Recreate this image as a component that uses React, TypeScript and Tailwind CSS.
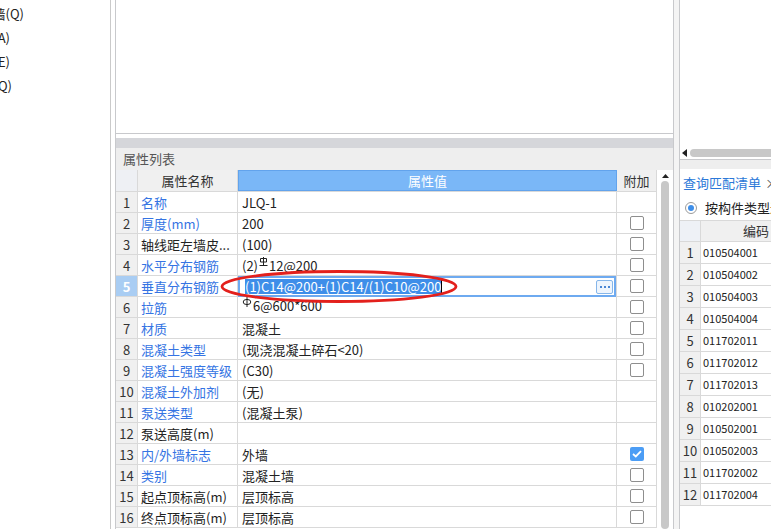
import React from "react";

type Check = "none" | "off" | "on";
type Prop = { name: string; value: React.ReactNode; link: boolean; check: Check };

function SteelIII() {
  return (
    <svg width="9" height="9" viewBox="0 0 9 9" fill="none" stroke="#222" strokeWidth="1" className="mx-[1px] -translate-y-[4px]">
      <path d="M4.5 0V8.5" />
      <path d="M1.5 1.5H7.5V5H1.5Z" />
      <path d="M0.5 8.5H8.5" />
    </svg>
  );
}

function Phi() {
  return (
    <svg width="10" height="10" viewBox="0 0 10 10" fill="none" stroke="#222" strokeWidth="1" className="mr-[1px] -translate-y-[3px]">
      <path d="M5 0V10" />
      <ellipse cx="5" cy="5" rx="3.8" ry="2.6" />
    </svg>
  );
}

function EditValue() {
  return (
    <div className="flex h-full w-full items-center border-2 border-[#6eaaf0] bg-white pl-[5px] pr-[1px]">
      <span className="bg-[#3e8ee9] leading-[15px] text-white">(1)C14@200+(1)C14/(1)C10@200</span>
      <span className="h-[15px] w-px bg-black" />
      <span className="flex-1" />
      <span className="flex h-[14px] w-[17px] items-center justify-center gap-[2px] rounded-[2px] border border-[#86b6ea] bg-[#eef5fd]">
        <span className="h-[2px] w-[2px] bg-[#4a86d4]" />
        <span className="h-[2px] w-[2px] bg-[#4a86d4]" />
        <span className="h-[2px] w-[2px] bg-[#4a86d4]" />
      </span>
    </div>
  );
}

const props: Prop[] = [
  { name: "名称", value: "JLQ-1", link: true, check: "none" },
  { name: "厚度(mm)", value: "200", link: true, check: "off" },
  { name: "轴线距左墙皮...", value: "(100)", link: false, check: "off" },
  { name: "水平分布钢筋", value: <>(2)<SteelIII />12@200</>, link: true, check: "off" },
  { name: "垂直分布钢筋", value: null, link: true, check: "off" },
  { name: "拉筋", value: <span className="flex -translate-y-[2px] items-center"><Phi />6@600*600</span>, link: true, check: "off" },
  { name: "材质", value: "混凝土", link: true, check: "off" },
  { name: "混凝土类型", value: "(现浇混凝土碎石<20)", link: true, check: "off" },
  { name: "混凝土强度等级", value: "(C30)", link: true, check: "off" },
  { name: "混凝土外加剂", value: "(无)", link: true, check: "none" },
  { name: "泵送类型", value: "(混凝土泵)", link: true, check: "none" },
  { name: "泵送高度(m)", value: "", link: false, check: "none" },
  { name: "内/外墙标志", value: "外墙", link: true, check: "on" },
  { name: "类别", value: "混凝土墙", link: true, check: "off" },
  { name: "起点顶标高(m)", value: "层顶标高", link: false, check: "off" },
  { name: "终点顶标高(m)", value: "层顶标高", link: false, check: "off" },
];

const sideItems = [
  { text: "砌体墙(Q)", w: "w-[24px]" },
  { text: "暗梁(A)", w: "w-[10px]" },
  { text: "墙垛(E)", w: "w-[10px]" },
  { text: "幕墙(Q)", w: "w-[12px]" },
];

const codes = [
  "010504001", "010504002", "010504003", "010504004", "011702011", "011702012",
  "011702013", "010202001", "010502001", "010502003", "011702002", "011702004",
];

function CheckBox({ state }: { state: Check }) {
  if (state === "none") return null;
  if (state === "on")
    return (
      <span className="flex h-[14px] w-[14px] items-center justify-center rounded-[2px] bg-[#4c9df5]">
        <svg width="10" height="8" viewBox="0 0 10 8" fill="none" stroke="white" strokeWidth="1.8">
          <path d="M1 4L3.8 6.5L9 1.2" />
        </svg>
      </span>
    );
  return <span className="h-[14px] w-[14px] rounded-[2px] border border-[#8e8e8e] bg-white" />;
}

export default function App() {
  return (
    <div className="relative flex h-[529px] w-[771px] overflow-hidden bg-white text-[13px] text-[#222] [font-family:'Noto_Sans_CJK_SC',sans-serif]">
      {/* 构件列表 */}
      <div className="w-[111px] shrink-0 border-r border-[#cacaca] pt-[1px]">
        {sideItems.map((s) => (
          <div key={s.text} className={`flex h-[24px] items-center justify-end whitespace-nowrap leading-none ${s.w}`}>
            {s.text}
          </div>
        ))}
      </div>
      <div className="w-[4px] shrink-0" />

      {/* 属性列表 */}
      <div className="flex w-[559px] shrink-0 flex-col border-x border-[#c8c9cc]">
        <div className="h-[134px] shrink-0 border-b border-[#c8c9cc]" />
        <div className="h-[4px] shrink-0" />
        <div className="h-[10px] shrink-0 bg-[#d5d6da]" />
        <div className="h-[22px] shrink-0 bg-[#eeeeee] pl-[7px] leading-[22px] text-[#555]">属性列表</div>

        <div className="flex min-h-0 flex-1">
          <div className="flex w-[541px] flex-col">
            <div className="flex h-[22px] shrink-0 border-b border-[#d9d9d9]">
              <div className="w-[22px] border-r border-[#d9d9d9] bg-[#eef0f4]" />
              <div className="flex w-[100px] items-center justify-center border-r border-[#d9d9d9] bg-[#f0f0f0] text-[#333]">属性名称</div>
              <div className="flex w-[379px] items-center justify-center border border-[#62a3ec] bg-[#7ab7f7] text-white">属性值</div>
              <div className="flex w-[40px] items-center justify-center border-r border-[#d9d9d9] bg-[#f0f0f0] text-[#333]">附加</div>
            </div>
            {props.map((p, i) => {
              const sel = i === 4;
              return (
                <div key={p.name} className="flex h-[21px] shrink-0 border-b border-[#d9d9d9] leading-none">
                  <div
                    className={`flex w-[22px] items-center justify-center border-r border-[#d9d9d9] ${
                      sel ? "bg-[#a9cdf3] font-bold text-white" : "bg-[#f0f0f0] text-[#333]"
                    }`}
                  >
                    {i + 1}
                  </div>
                  <div
                    className={`flex w-[100px] items-center overflow-hidden whitespace-nowrap border-r border-[#d9d9d9] pl-[3px] ${
                      p.link ? "text-[#3574e3]" : "text-[#222]"
                    }`}
                  >
                    {p.name}
                  </div>
                  <div className="flex w-[379px] items-center whitespace-nowrap border-r border-[#d9d9d9] pl-[4px]">
                    {sel ? <div className="-ml-[4px] -mb-px h-[21px] w-[379px]"><EditValue /></div> : p.value}
                  </div>
                  <div className="flex w-[40px] items-center justify-center border-r border-[#d9d9d9]">
                    <CheckBox state={p.check} />
                  </div>
                </div>
              );
            })}
          </div>
          {/* 竖向滚动条 */}
          <div className="flex w-[16px] flex-col items-center pt-[4px]">
            <svg width="7" height="4" viewBox="0 0 7 4">
              <path d="M0 4L3.5 0L7 4Z" fill="#222" />
            </svg>
            <div className="mt-[3px] w-[8px] flex-1 rounded-full bg-[#c8c8c8]" />
          </div>
        </div>
      </div>

      <div className="w-[5px] shrink-0 bg-[#f4f4f4]" />

      {/* 查询匹配清单 */}
      <div className="flex min-w-0 flex-1 flex-col border-l border-[#c8c9cc]">
        <div className="h-[146px] shrink-0" />
        <div className="flex h-[14px] shrink-0 items-center border-b border-[#c8c9cc] pl-[2px]">
          <svg width="5" height="8" viewBox="0 0 5 8">
            <path d="M5 0L0 4L5 8Z" fill="#222" />
          </svg>
          <div className="ml-[3px] h-[8px] flex-1 rounded-l-full bg-[#c8c8c8]" />
        </div>
        <div className="h-[9px] shrink-0 bg-[#eeeeee]" />
        <div className="flex h-[27px] shrink-0 items-center whitespace-nowrap bg-white pl-[3px]">
          <span className="text-[#2b78d8]">查询匹配清单</span>
          <span className="ml-[4px] text-[#555]">×</span>
        </div>
        <div className="flex h-[24px] shrink-0 items-center whitespace-nowrap pl-[5px]">
          <span className="flex h-[12px] w-[12px] shrink-0 items-center justify-center rounded-full border border-[#9a9a9a] bg-white">
            <span className="h-[6px] w-[6px] rounded-full bg-[#3d8ee9]" />
          </span>
          <span className="ml-[8px]">按构件类型过滤</span>
        </div>
        <div className="flex h-[22px] shrink-0 border-y border-[#d9d9d9]">
          <div className="w-[21px] shrink-0 border-r border-[#d9d9d9] bg-[#eef1f6]" />
          <div className="flex w-[110px] shrink-0 items-center justify-center bg-[#f0f0f0] text-[#333]">编码</div>
        </div>
        {codes.map((c, i) => (
          <div key={c} className="flex h-[22px] shrink-0 border-b border-[#d9d9d9] leading-none">
            <div className="flex w-[21px] shrink-0 items-center justify-center border-r border-[#d9d9d9] bg-[#f0f0f0] text-[#333]">
              {i + 1}
            </div>
            <div className="flex shrink-0 items-center pl-[2px] text-[11px] text-[#222]">{c}</div>
          </div>
        ))}
      </div>

      {/* 红色标注圈 */}
      <svg className="pointer-events-none absolute left-[218px] top-[268px]" width="242" height="37" viewBox="0 0 242 37" fill="none">
        <ellipse cx="121" cy="18.5" rx="117" ry="15" stroke="#e3201c" strokeWidth="2.8" />
      </svg>
    </div>
  );
}
